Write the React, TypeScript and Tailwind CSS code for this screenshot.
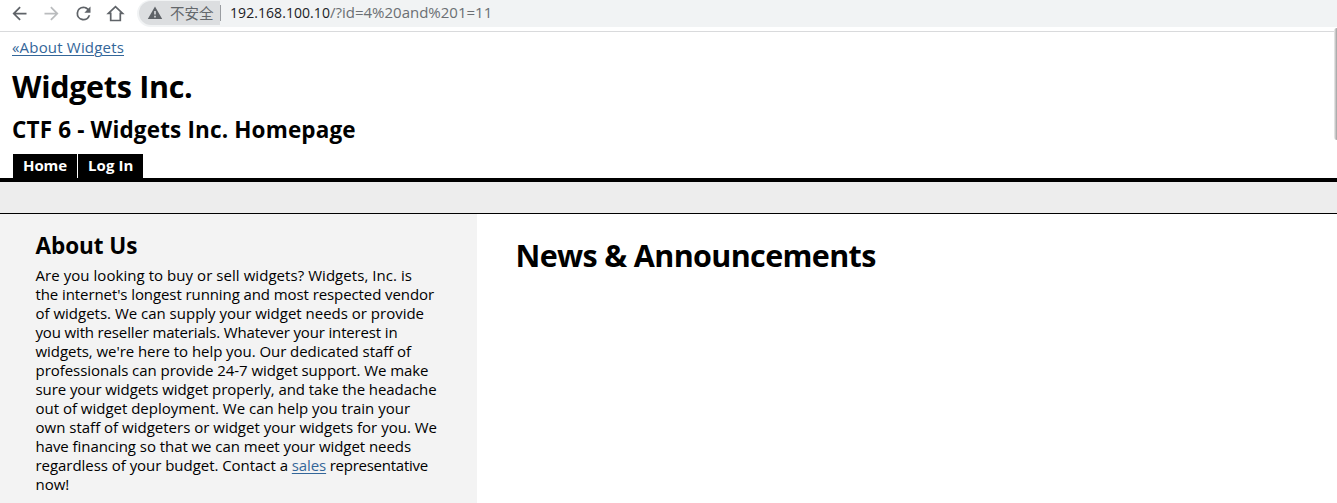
type Line = { text: string; tracking: string };

const aboutLines: Line[] = [
  { text: "Are you looking to buy or sell widgets? Widgets, Inc. is", tracking: "tracking-[0.054px]" },
  { text: "the internet's longest running and most respected vendor", tracking: "tracking-[-0.089px]" },
  { text: "of widgets. We can supply your widget needs or provide", tracking: "tracking-[-0.006px]" },
  { text: "you with reseller materials. Whatever your interest in", tracking: "tracking-[-0.152px]" },
  { text: "widgets, we're here to help you. Our dedicated staff of", tracking: "tracking-[-0.051px]" },
  { text: "professionals can provide 24-7 widget support. We make", tracking: "tracking-[-0.048px]" },
  { text: "sure your widgets widget properly, and take the headache", tracking: "tracking-[-0.076px]" },
  { text: "out of widget deployment. We can help you train your", tracking: "tracking-[-0.011px]" },
  { text: "own staff of widgeters or widget your widgets for you. We", tracking: "tracking-[0.003px]" },
  { text: "have financing so that we can meet your widget needs", tracking: "tracking-[-0.055px]" },
];

const linkClass = "text-[#336699] underline underline-offset-2 decoration-1";

function BrowserBar() {
  return (
    <header className="flex h-8 items-start border-b border-[#d9dadc] bg-white">
      <div className="flex h-[26px] w-[137px] shrink-0 items-center gap-[11px] pl-[8.5px] text-[#5f6368]">
        <svg viewBox="0 0 24 24" className="size-[21px] shrink-0" fill="currentColor">
          <path d="M20 11H7.83l5.59-5.59L12 4l-8 8 8 8 1.41-1.41L7.83 13H20z" />
        </svg>
        <svg viewBox="0 0 24 24" className="size-[21px] shrink-0 text-[#babcbe]" fill="currentColor">
          <path d="M4 13h12.17l-5.59 5.59L12 20l8-8-8-8-1.41 1.41L16.17 11H4z" />
        </svg>
        <svg viewBox="0 0 24 24" className="size-[21px] shrink-0" fill="currentColor">
          <path d="M17.65 6.35A7.96 7.96 0 0 0 12 4a8 8 0 1 0 7.73 10h-2.08A6 6 0 1 1 12 6c1.66 0 3.14.69 4.22 1.78L13 11h7V4z" />
        </svg>
        <svg viewBox="0 0 21 21" className="size-[21px] shrink-0" fill="none" stroke="currentColor" strokeWidth="1.7">
          <path d="M3.4 10.4 10.5 3.6l7.1 6.8H15.300v7.100H5.700v-7.100z" />
        </svg>
      </div>
      <div className="flex h-[27px] min-w-0 grow items-start rounded-l-full bg-[#f1f3f4] pl-[2px] pt-px">
        <div className="flex h-6 w-[81px] shrink-0 items-center rounded-l-full rounded-r-[12px] bg-[#dcdee0] pl-2">
          <svg viewBox="0 0 16 16" className="size-4 shrink-0" fill="#5f6368">
            <path fillRule="evenodd" d="M8 1.400 15.200 14H.8zM7.200 6v3.600h1.600V6zm0 4.800v1.600h1.600v-1.600z" />
          </svg>
          <span className="ml-[7px] whitespace-nowrap font-['Noto_Sans_CJK_SC',sans-serif] text-[14.500px] leading-6 text-[#63676b]">
            不安全
          </span>
        </div>
        <div className="mt-1 h-4 w-px bg-[#9a9da1]" />
        <div className="ml-[9px] -mt-px whitespace-nowrap text-[15px] leading-6 text-[#6b6f73]">
          <span className="text-[14px] tracking-[0.065px] text-[#202124]">192.168.100.10</span>
          <span>/?id=4%20and%201=11</span>
        </div>
      </div>
    </header>
  );
}

export default function App() {
  return (
    <div className="relative flex h-[503px] w-[1337px] flex-col overflow-hidden bg-white font-['Open_Sans','Noto_Sans_CJK_SC',sans-serif] text-[15px] text-black">
      <BrowserBar />
      <div className="flex h-[146px] flex-col items-start pl-3 pt-[5px]">
        <a className={`${linkClass} leading-5 tracking-[0.183px]`}>«About Widgets</a>
        <h1 className="mt-[9px] text-[30.500px] font-bold leading-10 tracking-[-0.31px]">Widgets Inc.</h1>
        <h2 className="mt-2 text-[22.500px] font-bold leading-[31px] tracking-[0.15px]">CTF 6 - Widgets Inc. Homepage</h2>
        <nav className="ml-px mt-[9px] flex h-6 gap-px font-bold leading-[23px] text-white">
          <a className="w-16 bg-black pl-[10px] tracking-[-0.089px]">Home</a>
          <a className="w-[65px] bg-black pl-[10px] tracking-[0.091px]">Log In</a>
        </nav>
      </div>
      <div className="h-9 shrink-0 border-b border-t-4 border-black bg-[#ededed]" />
      <main className="flex min-h-0 grow">
        <aside className="w-[477px] shrink-0 bg-[#f3f3f3] pl-[35.500px] pt-4">
          <h2 className="text-[22.500px] font-bold leading-[31px] tracking-[-0.05px]">About Us</h2>
          <div className="mt-[5px] whitespace-nowrap leading-[19px]">
            {aboutLines.map((line) => (
              <div key={line.text} className={line.tracking}>
                {line.text}
              </div>
            ))}
            <div>
              <span className="tracking-[-0.04px]">regardless of your budget. Contact a </span>
              <a className={`${linkClass} tracking-[-0.111px]`}>sales</a>
              <span className="tracking-[-0.26px]"> representative</span>
            </div>
            <div>now!</div>
          </div>
        </aside>
        <section className="pl-[38.500px] pt-[21px]">
          <h1 className="text-[30.500px] font-bold leading-10 tracking-[-0.64px]">News &amp; Announcements</h1>
        </section>
      </main>
      <div className="absolute left-[1334px] top-[28px] h-[112px] w-[3px] rounded-l-sm bg-linear-to-r from-[#f0f0f0] to-[#a0a0a0]" />
    </div>
  );
}
